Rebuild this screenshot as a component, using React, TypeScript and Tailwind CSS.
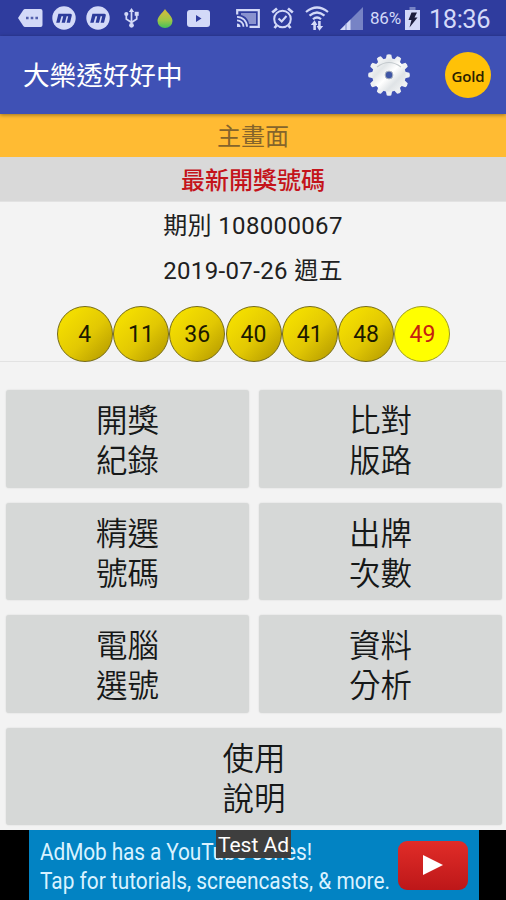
import type { ReactNode } from "react";

const balls = [4, 11, 36, 40, 41, 48, 49];

const menuItems = [
  ["開獎", "紀錄"],
  ["比對", "版路"],
  ["精選", "號碼"],
  ["出牌", "次數"],
  ["電腦", "選號"],
  ["資料", "分析"],
  ["使用", "說明"],
];

const MIcon = () => (
  <svg width="24" height="24" viewBox="0 0 24 24">
    <circle cx="12" cy="12" r="11.7" fill="#d3d9f8" />
    <path
      d="M4.2 16.8 6.4 7.8H18.4Q20.2 7.8 19.8 9.6L18 16.8H14.6L16.2 10.3H14.6L13 16.8H9.6L11.2 10.3H9.5L7.6 16.8Z"
      fill="#2c3b9b"
    />
  </svg>
);

const StatusBar = () => (
  <div className="flex h-9 items-center bg-[#2f3c9e] pl-[18px] text-[#d3d9f8]">
    <svg width="25" height="18" viewBox="0 0 25 18">
      <path d="M7 0H22.5Q24.5 0 24.5 2V16Q24.5 18 22.5 18H7Q6 18 5.3 17L0 9 5.3 1Q6 0 7 0Z" fill="currentColor" />
      <path d="M8 7.7h2.6v2.6H8zM12.7 7.7h2.6v2.6h-2.6zM17.4 7.7H20v2.6h-2.6z" fill="#5360ad" />
    </svg>
    <div className="ml-[9px] flex gap-[10px]">
      <MIcon />
      <MIcon />
    </div>
    <svg className="ml-[13px]" width="17" height="20" viewBox="0 0 17 20" fill="none" stroke="currentColor" strokeWidth="1.7">
      <path d="M8.5 2V17M8.5 14.5 3.3 11V7M8.5 14.5 13.7 11V6" />
      <path d="M5.8 4 8.5 0 11.2 4Z" fill="currentColor" stroke="none" />
      <circle cx="8.5" cy="17.3" r="2.4" fill="currentColor" stroke="none" />
      <circle cx="3.3" cy="6" r="2.1" fill="currentColor" stroke="none" />
      <path d="M11.7 3.8h4v4h-4z" fill="currentColor" stroke="none" />
    </svg>
    <svg className="ml-[17px]" width="16" height="19" viewBox="0 0 16 19">
      <defs>
        <linearGradient id="drop" x1="0" y1="0" x2="0" y2="1">
          <stop offset=".2" stopColor="#c8bd3e" />
          <stop offset=".6" stopColor="#9cc747" />
          <stop offset="1" stopColor="#43bf5b" />
        </linearGradient>
      </defs>
      <path d="M8 0C5.5 4 .5 7.5.5 12A7.5 7 0 0 0 15.5 12C15.5 7.5 10.5 4 8 0Z" fill="url(#drop)" />
    </svg>
    <svg className="ml-[14px]" width="23" height="17" viewBox="0 0 23 17">
      <rect width="23" height="17" rx="3" fill="currentColor" />
      <path d="M9 5V12L14.5 8.5Z" fill="#2f3c9e" />
    </svg>
    <svg className="ml-[26px]" width="24" height="19" viewBox="0 0 24 19" fill="none" stroke="currentColor">
      <path d="M1.2 5.5V1.2H22.8V17.8H13.5" strokeWidth="2.2" />
      <path d="M5 4H20V15H13C12.5 10.5 9.5 7 5 6Z" fill="currentColor" opacity=".55" stroke="none" />
      <path d="M1 7.8A10 10 0 0 1 11 17.8M1 11.3A6.5 6.5 0 0 1 7.5 17.8" strokeWidth="1.8" />
      <path d="M1 14.5A3.5 3.5 0 0 1 4.5 18H1Z" fill="currentColor" stroke="none" />
    </svg>
    <svg className="ml-[11px]" width="23" height="22" viewBox="0 0 23 22" fill="none" stroke="currentColor" strokeWidth="2">
      <circle cx="11.5" cy="12" r="8.3" />
      <path d="M7.5 11.5 10.7 14.5 15.5 9" />
      <path d="M1.2 5.5 6 1.5M21.8 5.5 17 1.5M5.5 18.5 3.5 21M17.5 18.5 19.5 21" strokeWidth="2.7" />
    </svg>
    <svg className="ml-[11px]" width="24" height="25" viewBox="0 0 24 25" fill="none" stroke="currentColor">
      <path d="M1 6Q12-3 23 6M4.5 9.7Q12 3.3 19.5 9.7M8 13.3Q12 9.7 16 13.3" strokeWidth="2.2" />
      <path d="M9.6 24V17.5M14.4 15V22" strokeWidth="2.6" />
      <path d="M5.8 19 9.6 14.2 12.4 19ZM11.6 20 14.4 24.8 18.2 20Z" fill="currentColor" stroke="none" />
    </svg>
    <svg className="ml-[11px]" width="24" height="23" viewBox="0 0 24 23">
      <path d="M0 23 23 0V23Z" fill="#7783c5" />
      <path d="M0 23 10.5 12.5V23Z" fill="currentColor" />
      <path d="M6 16.5V23" stroke="#7783c5" />
    </svg>
    <span className="ml-[6px] w-[33px] whitespace-nowrap pt-[2px] text-[17px] tracking-[-0.2px]">86%</span>
    <svg className="ml-[2px]" width="15" height="23" viewBox="0 0 15 23">
      <path d="M4.5 0h6v3h-6z" fill="#7783c5" />
      <path d="M0 3h15v20H0z" fill="currentColor" />
      <path d="M6.5 5.5H12L9.5 10.5H12.5L4.5 20.5 6.5 13H3.5Z" fill="#1b1d3c" />
    </svg>
    <span className="ml-[9px] whitespace-nowrap pt-[2px] text-[25.5px] tracking-[-0.5px]">18:36</span>
  </div>
);

const Gear = () => (
  <svg width="42" height="42" viewBox="-21 -21 42 42">
    <defs>
      <linearGradient id="gear" x1="0" y1="0" x2="1" y2="1">
        <stop offset="0" stopColor="#fff" />
        <stop offset=".3" stopColor="#e2e6e8" />
        <stop offset=".5" stopColor="#fff" />
        <stop offset=".7" stopColor="#dfe3e6" />
        <stop offset="1" stopColor="#fafafa" />
      </linearGradient>
    </defs>
    {[0, 30, 60, 90, 120, 150, 180, 210, 240, 270, 300, 330].map((angle) => (
      <path
        key={angle}
        d="M-3.4-15 -2.3-20.3Q0-21.4 2.3-20.3L3.4-15Z"
        fill="#eef0f2"
        transform={`rotate(${angle})`}
      />
    ))}
    <circle r="16.8" fill="url(#gear)" />
    <path d="M-12-8Q0-17 12-8" fill="none" stroke="#c3c9cd" strokeWidth="1.2" />
    <circle r="3.9" fill="#3f56a5" stroke="#aeb5c0" />
  </svg>
);

const Header = () => (
  <header className="relative z-10 flex h-[78px] items-center bg-[#3f51b5] pl-[23px] shadow-[0_1px_4px_rgba(0,0,0,0.4)]">
    <h1 className="pt-[2px] text-[26.6px] leading-none font-normal text-white">大樂透好好中</h1>
    <div className="ml-auto flex items-center gap-[35px] pr-[15px]">
      <Gear />
      <div className="flex size-[46px] items-center justify-center rounded-full bg-[#ffc107] pt-[2px] font-['Open_Sans'] text-[15px] font-semibold tracking-[-0.2px] text-[#2b2100]">
        Gold
      </div>
    </div>
  </header>
);

const Row = ({ className, children }: { className: string; children: ReactNode }) => (
  <div className={`flex items-center justify-center text-[24px] leading-none ${className}`}>{children}</div>
);

const AdBanner = () => (
  <div className="relative mt-[5px] flex h-[70px] bg-black pl-[29px]">
    <div className="flex w-[450px] items-center justify-between bg-[#0283c3] pr-[11px] pl-[11px]">
      <div className="w-[350px] origin-left scale-x-[0.887] pt-[4px] text-[23.5px] leading-[29px] whitespace-nowrap text-[#d9f2ff]">
        <p className="tracking-[-0.12px]">AdMob has a YouTube series!</p>
        <p>Tap for tutorials, screencasts, &amp; more.</p>
      </div>
      <div className="flex h-[49px] w-[70px] shrink-0 items-center justify-center rounded-[9px] bg-linear-to-b from-[#e12c28] to-[#bd1719]">
        <svg width="20" height="20" viewBox="0 0 20 20">
          <path d="M0 0V20L20 10Z" fill="#fff" />
        </svg>
      </div>
    </div>
    <div className="absolute top-0 left-[216px] flex h-[28px] w-[75px] items-center justify-center bg-[#3e3e3e] pt-[3px] text-[21px] whitespace-nowrap text-white">
      Test Ad
    </div>
  </div>
);

const App = () => {
  return (
    <div className="h-[900px] w-[506px] overflow-hidden bg-[#f3f3f3] font-[Roboto,'Noto_Sans_CJK_TC',sans-serif]">
      <StatusBar />
      <Header />
      <Row className="h-[43px] bg-[#ffbb33] pt-[3px] text-[#85642b]">主畫面</Row>
      <Row className="h-[45px] border-b border-[#e2e2e2] bg-[#d9d9d9] pt-[4px] font-medium text-[#c4141b]">最新開獎號碼</Row>
      <section className="h-[160px] border-b border-[#e2e2e2] text-[#202020]">
        <Row className="h-[45px] pt-[2px] tracking-[0.35px]">期別 108000067</Row>
        <Row className="h-[45px] pt-[2px] tracking-[0.35px]">2019-07-26 週五</Row>
        <div className="mt-[14px] flex justify-center gap-[0.3px] pl-[1px]">
          {balls.map((n) => (
            <div
              key={n}
              className={`flex size-[56px] shrink-0 items-center justify-center rounded-full border-[1.5px] pt-[2px] text-[23px] ${
                n === 49
                  ? "border-[#9c9a22] bg-[#ffff00] text-[#c62010]"
                  : "border-[#756b18] bg-linear-to-br from-[#f2dc00] from-20% via-[#e2c803] via-55% to-[#b59b00] to-95% text-[#1c1a00]"
              }`}
            >
              {n}
            </div>
          ))}
        </div>
      </section>
      <div className="grid grid-cols-2 gap-x-[10px] gap-y-[15px] pt-[28px] pr-[4px] pl-[6px]">
        {menuItems.map(([top, bottom]) => (
          <button
            key={top}
            type="button"
            className="h-[97.6px] rounded-[3px] bg-[#d6d8d7] pt-[7px] text-[31.5px] leading-[40px] font-[350] text-[#161818] shadow-[0_0_2px_rgba(0,0,0,0.12)] last:col-span-2"
          >
            {top}
            <br />
            {bottom}
          </button>
        ))}
      </div>
      <AdBanner />
    </div>
  );
};

export default App;
